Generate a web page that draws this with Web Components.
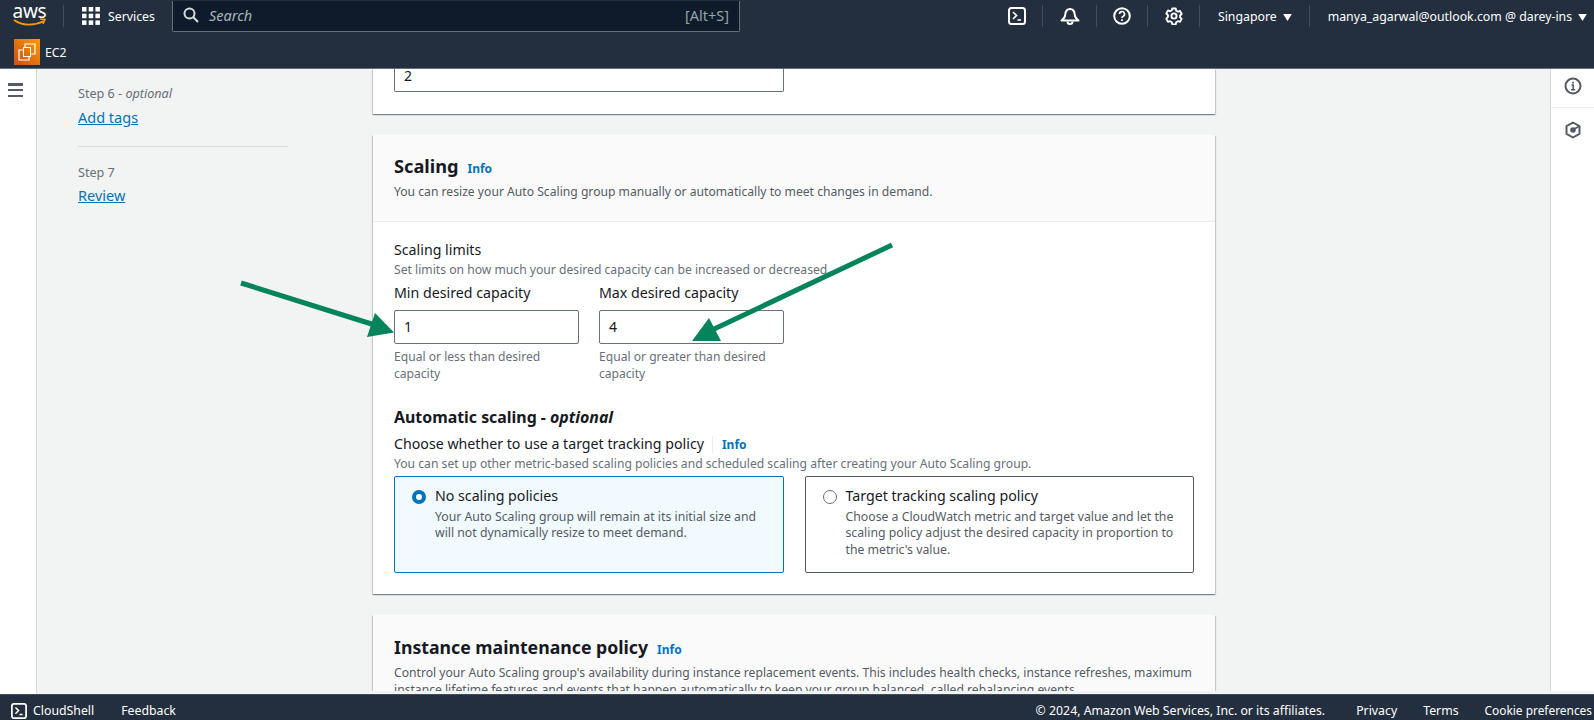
<!DOCTYPE html>
<html>
<head>
<meta charset="utf-8">
<title>EC2 Auto Scaling</title>
<style>
  html, body { margin: 0; height: 100%; overflow: hidden; background: #f2f3f3; }
  body { font-family: "Noto Sans", "Open Sans", sans-serif; color: #16191f; }
</style>
</head>
<body>
<app-shell>
  <wizard-nav slot="nav"></wizard-nav>

  <form-card slot="cards" cut>
    <num-field value="2" wide cut></num-field>
  </form-card>

  <form-card slot="cards" heading="Scaling" desc="You can resize your Auto Scaling group manually or automatically to meet changes in demand.">
    <scaling-body></scaling-body>
  </form-card>

  <form-card slot="cards" large heading="Instance maintenance policy" desc="Control your Auto Scaling group's availability during instance replacement events. This includes health checks, instance refreshes, maximum instance lifetime features and events that happen automatically to keep your group balanced, called rebalancing events."></form-card>
</app-shell>
<annot-arrows></annot-arrows>

<script>
const ICON = {
  terminal: `<svg viewBox="0 0 18 18" width="18" height="18" fill="none" stroke="currentColor" stroke-width="2"><rect x="1" y="1" width="16" height="16" rx="2.5"/><path d="M5 5l3.5 3.5L5 12M9.5 13H13" stroke-width="1.7"/></svg>`,
  bell: `<svg viewBox="0 0 20 18" width="20" height="18" fill="none" stroke="currentColor" stroke-width="2"><path d="M1.5 13.500h17c-2.500-1.600-3.500-3-3.800-6C14.400 4 12.500 2 10 2S5.600 4 5.300 7.500c-.3 3-1.300 4.400-3.800 6z" stroke-linejoin="round"/><path d="M7.500 14.500a2.500 2.500 0 0 0 5 0" /></svg>`,
  help: `<svg viewBox="0 0 18 18" width="18" height="18" fill="none" stroke="currentColor" stroke-width="2"><circle cx="9" cy="9" r="7.800"/><path d="M6.500 7a2.500 2.500 0 1 1 3.700 2.200c-.8.4-1.200.9-1.200 1.800" stroke-width="1.700"/><path d="M9 12.200v1.800" stroke-width="1.800"/></svg>`,
  gear: `<svg viewBox="0 0 18 18" width="18" height="18" fill="none" stroke="currentColor" stroke-width="1.900"><path d="M7.300 1.500h3.400l.5 2.200 1.700 1 2.100-.7 1.700 3-1.600 1.500v1.900l1.600 1.500-1.700 3-2.100-.7-1.700 1-.5 2.200H7.300l-.5-2.200-1.700-1-2.100.7-1.700-3L2.900 9.900V8L1.300 6.500l1.700-3 2.100.7 1.700-1z" stroke-linejoin="round"/><circle cx="9" cy="9" r="2.600"/></svg>`,
  search: `<svg viewBox="0 0 16 16" width="16" height="16" fill="none" stroke="currentColor" stroke-width="2"><circle cx="6.500" cy="6.500" r="5"/><path d="M10.300 10.300L15 15"/></svg>`,
  caret: `<svg viewBox="0 0 10 8" width="9" height="7" fill="currentColor"><path d="M0 0h10L5 8z"/></svg>`,
  grid: `<svg viewBox="0 0 18 18" width="18" height="18" fill="#fff"><rect x="0" y="0" width="4.500" height="4.500"/><rect x="6.700" y="0" width="4.500" height="4.500"/><rect x="13.400" y="0" width="4.500" height="4.500"/><rect x="0" y="6.700" width="4.500" height="4.500"/><rect x="6.700" y="6.700" width="4.500" height="4.500"/><rect x="13.400" y="6.700" width="4.500" height="4.500"/><rect x="0" y="13.400" width="4.500" height="4.500"/><rect x="6.700" y="13.400" width="4.500" height="4.500"/><rect x="13.400" y="13.400" width="4.500" height="4.500"/></svg>`,
  ec2: `<svg viewBox="0 0 26 26" width="26" height="26"><defs><linearGradient id="o" x1="0" y1="1" x2="1" y2="0"><stop offset="0" stop-color="#c8511b"/><stop offset="1" stop-color="#f90"/></linearGradient></defs><rect width="26" height="26" fill="url(#o)"/><g fill="none" stroke="#fff" stroke-width="1.200"><path d="M11 8V5h10v10h-4"/><path d="M9 11H5v10h10v-3"/><rect x="9.500" y="8.500" width="7" height="9" stroke-width="1"/></g></svg>`,
  info: `<svg viewBox="0 0 18 18" width="18" height="18" fill="none" stroke="#545b64" stroke-width="2"><circle cx="9" cy="9" r="7.500"/><path d="M7.500 8h1.700v4.500M7 12.700h4.200" stroke-width="1.600"/><path d="M8.200 4.800h1.800v1.700H8.200z" fill="#545b64" stroke="none"/></svg>`,
  hex: `<svg viewBox="0 0 18 18" width="18" height="18" fill="none" stroke="#545b64" stroke-width="2"><path d="M9 1.500l6.500 3.700v7.600L9 16.500l-6.500-3.700V5.200z" stroke-linejoin="round"/><circle cx="9" cy="9" r="2.800" fill="#545b64" stroke="none"/><path d="M10 8l5-2.500" stroke-width="1.600"/></svg>`
};

class AppShell extends HTMLElement {
  constructor() {
    super();
    this.attachShadow({ mode: "open" });
    this.shadowRoot.innerHTML = `
      <style>
        :host { display: flex; flex-direction: column; height: 720px; }
        #middle { flex: 1; display: flex; min-height: 0; }
        #rail-left {
          flex: none; background: #fff; border-right: 1px solid #d5dbdb;
          display: flex; padding: 14px 0 0 8px; box-sizing: border-box; width: 37px;
        }
        #burger { width: 15px; height: 14px; display: flex; flex-direction: column; justify-content: space-between; }
        #burger i { display: block; height: 2.500px; background: #545b64; }
        #main { flex: 1; min-width: 0; height: 622px; overflow: hidden; display: flex; padding-left: 41px; }
        #cards { width: 842px; margin-left: 85px; display: flex; flex-direction: column; gap: 21px; flex: none; }
        #rail-right {
          width: 43px; flex: none; height: 622px; background: #fff; border-left: 1px solid #d5dbdb;
          display: flex; flex-direction: column;
        }
        #rail-right div { height: 38px; box-sizing: border-box; padding-bottom: 4px; display: flex; align-items: center; justify-content: center; }
        #rail-right div + div { border-top: 1px solid #eaeded; height: 46px; padding-bottom: 2px; }
      </style>
      <top-bar></top-bar>
      <div id="middle">
        <div id="rail-left"><div id="burger"><i></i><i></i><i></i></div></div>
        <div id="main">
          <slot name="nav"></slot>
          <div id="cards"><slot name="cards"></slot></div>
        </div>
        <div id="rail-right">
          <div>${ICON.info}</div>
          <div>${ICON.hex}</div>
        </div>
      </div>
      <bottom-bar></bottom-bar>
    `;
  }
}

class TopBar extends HTMLElement {
  constructor() {
    super();
    this.attachShadow({ mode: "open" });
    this.shadowRoot.innerHTML = `
      <style>
        :host { display: block; height: 68px; background: #232f3e; border-bottom: 1px solid #687078; color: #fff; font-size: 12.300px; }
        #row1 { height: 32px; display: flex; align-items: center; position: relative; }
        #row2 { height: 36px; display: flex; align-items: center; padding: 4px 0 0 14px; box-sizing: border-box; gap: 5px; }
        #logo { width: 33px; margin-left: 13px; height: 28px; display: flex; flex-direction: column; align-items: center; }
        #logo span { font-size: 19px; line-height: 19px; letter-spacing: -0.3px; margin-top: 0; }
        #logo svg { margin-top: -3px; }
        .sep { width: 1px; height: 22px; background: #414d5c; flex: none; }
        #grid { margin-left: 18px; height: 18px; }
        #services { margin-left: 8px; }
        #search {
          margin-left: 17px; width: 568px; height: 31px; box-sizing: border-box; background: #0f1b2a;
          border: 1px solid #687078; border-top: none; border-radius: 0 0 2px 2px;
          display: flex; align-items: center; padding: 0 10px 2px; color: #d5dbdb;
        }
        #search em { margin-left: 10px; color: #aab7b8; font-size: 14.500px; }
        #search b { margin-left: auto; font-weight: 400; color: #95a5a6; font-size: 14.500px; }
        .ic { display: flex; align-items: center; justify-content: center; flex: none; }
        .caret { margin-left: 6px; }
      </style>
      <div id="row1">
        <div id="logo"><span>aws</span>
          <svg width="33" height="9" viewBox="0 0 33 9" fill="none"><path d="M1 2c8 6 20 6 30 1" stroke="#f90" stroke-width="1.800"/><path d="M27 1l5 .5-2 4.500" stroke="#f90" stroke-width="1.500"/></svg>
        </div>
        <div class="sep" style="margin-left:17px"></div>
        <div id="grid">${ICON.grid}</div>
        <span id="services">Services</span>
        <div id="search">${ICON.search}<em>Search</em><b>[Alt+S]</b></div>
        <div class="ic" style="width:18px;margin-left:268px">${ICON.terminal}</div>
        <div class="sep" style="margin-left:16px"></div>
        <div class="ic" style="width:20px;margin-left:17px">${ICON.bell}</div>
        <div class="sep" style="margin-left:16px"></div>
        <div class="ic" style="width:18px;margin-left:16px">${ICON.help}</div>
        <div class="sep" style="margin-left:16px"></div>
        <div class="ic" style="width:18px;margin-left:17px">${ICON.gear}</div>
        <div class="sep" style="margin-left:16px"></div>
        <span style="margin-left:18px">Singapore</span><span class="caret">${ICON.caret}</span>
        <div class="sep" style="margin-left:17px"></div>
        <span style="margin-left:18px;white-space:nowrap">manya_agarwal@outlook.com @ darey-ins</span><span class="caret">${ICON.caret}</span>
      </div>
      <div id="row2">${ICON.ec2}<span>EC2</span></div>
    `;
  }
}

class BottomBar extends HTMLElement {
  constructor() {
    super();
    this.attachShadow({ mode: "open" });
    this.shadowRoot.innerHTML = `
      <style>
        :host { display: flex; height: 26px; box-sizing: border-box; background: #232f3e; color: #fff; font-size: 12.300px; align-items: center; border-top: 1px solid #414d5c; padding-top: 6px; padding-left: 11px; white-space: nowrap; }
        svg { width: 16px; height: 16px; }
        #r { margin-left: auto; display: flex; align-items: baseline; }
      </style>
      ${ICON.terminal}
      <span style="margin-left:6px">CloudShell</span>
      <span style="margin-left:27px">Feedback</span>
      <div id="r">
        <span>© 2024, Amazon Web Services, Inc. or its affiliates.</span>
        <span style="margin-left:31px">Privacy</span>
        <span style="margin-left:26px">Terms</span>
        <span style="margin-left:26px;margin-right:2px;font-size:11.900px">Cookie preferences</span>
      </div>
    `;
  }
}

class WizardNav extends HTMLElement {
  constructor() {
    super();
    this.attachShadow({ mode: "open" });
    this.shadowRoot.innerHTML = `
      <style>
        :host { display: block; width: 210px; flex: none; padding-top: 17px; }
        .step { font-size: 12.600px; line-height: 16px; color: #687078; }
        a { display: block; font-size: 14.500px; line-height: 20px; color: #0073bb; text-decoration: underline; }
        hr { border: 0; border-top: 1px solid #d5dbdb; margin: 19px 0 0; }
      </style>
      <div class="step">Step 6 - <em>optional</em></div>
      <a style="margin-top:5px">Add tags</a>
      <hr>
      <div class="step" style="margin-top:18px">Step 7</div>
      <a style="margin-top:4px">Review</a>
    `;
  }
}

class InfoLink extends HTMLElement {
  constructor() {
    super();
    this.attachShadow({ mode: "open" });
    this.shadowRoot.innerHTML = `
      <style>:host { color: #0073bb; font-size: 12px; font-weight: 700; }</style>
      Info
    `;
  }
}

class FormCard extends HTMLElement {
  constructor() {
    super();
    this.attachShadow({ mode: "open" });
  }

  connectedCallback() {
    const heading = this.getAttribute("heading");
    const desc = this.getAttribute("desc");
    const head = heading ? `
      <div id="head">
        <div id="title"><span id="t">${heading}</span><info-link></info-link></div>
        <div id="desc">${desc}</div>
      </div>` : "";
    this.shadowRoot.innerHTML = `
      <style>
        :host { display: block; background: #fff; box-shadow: 0 1px 1px 0 rgba(0,28,36,.3), 1px 1px 1px 0 rgba(0,28,36,.15), -1px 1px 1px 0 rgba(0,28,36,.15); flex: none; }
        :host([cut]) { padding: 0 21px 22px; }
        #head { background: #fafafa; border-bottom: 1px solid #eaeded; padding: 19px 21px 20px; height: 87px; box-sizing: border-box; }
        :host([large]) #head { height: auto; padding-top: 20px; padding-bottom: 12px; }
        :host([large]) #t { font-size: 17.700px; }
        #title { display: flex; align-items: baseline; gap: 9px; line-height: 24px; }
        #t { font-size: 18.200px; font-weight: 700; color: #16191f; }
        #desc { margin-top: 2px; font-size: 12.150px; line-height: 17px; color: #545b64; }
      </style>
      ${head}
      <slot></slot>
    `;
  }
}

class NumField extends HTMLElement {
  constructor() {
    super();
    this.attachShadow({ mode: "open" });
  }

  connectedCallback() {
    this.shadowRoot.innerHTML = `
      <style>
        :host { display: block; width: 184.500px; }
        :host([wide]) { width: 390px; }
        #box {
          height: 34px; box-sizing: border-box; border: 1px solid #687078; border-radius: 2px;
          padding: 0 9px 1px; display: flex; align-items: center; font-size: 14px; color: #16191f; background: #fff;
        }
        :host([cut]) #box { height: 23px; border-top: 0; border-radius: 0 0 2px 2px; padding-bottom: 9px; }
      </style>
      <div id="box">${this.getAttribute("value")}</div>
    `;
  }
}

class RadioTile extends HTMLElement {
  constructor() {
    super();
    this.attachShadow({ mode: "open" });
  }

  connectedCallback() {
    this.shadowRoot.innerHTML = `
      <style>
        :host { display: flex; flex: 1; box-sizing: border-box; height: 97px; border: 1px solid #545b64; border-radius: 2px; padding: 10px 18px 0 17px; gap: 9px; background: #fff; }
        :host([checked]) { border-color: #0073bb; background: #f1faff; }
        #dot { width: 14px; height: 14px; margin-top: 3px; flex: none; box-sizing: border-box; border-radius: 50%; border: 1px solid #687078; background: #fff; }
        :host([checked]) #dot { border: 4px solid #0073bb; }
        #label { font-size: 14.200px; line-height: 18px; color: #16191f; }
        #sub { margin-top: 3.500px; font-size: 12.250px; line-height: 16.800px; color: #545b64; }
      </style>
      <div id="dot"></div>
      <div>
        <div id="label"><slot name="label"></slot></div>
        <div id="sub"><slot name="sub"></slot></div>
      </div>
    `;
  }
}

class ScalingBody extends HTMLElement {
  constructor() {
    super();
    this.attachShadow({ mode: "open" });
    this.shadowRoot.innerHTML = `
      <style>
        :host { display: block; padding: 19px 21px 21px; }
        .h { font-size: 14.200px; line-height: 18px; color: #16191f; }
        .s { font-size: 12.150px; line-height: 16px; color: #687078; }
        .fields { display: flex; gap: 20.500px; margin-top: 6px; }
        .field { width: 184.500px; }
        .field num-field { margin-top: 8px; }
        .help { margin-top: 5px; font-size: 12.100px; line-height: 16.500px; color: #687078; }
        h3 { margin: 25px 0 0; font-size: 15.900px; line-height: 20px; font-weight: 700; color: #16191f; }
        .choose { display: flex; align-items: center; margin-top: 8px; }
        .choose info-link { border-left: 1px solid #eaeded; margin-left: 8px; padding-left: 9px; }
        .tiles { display: flex; gap: 21px; margin-top: 4px; }
      </style>
      <div class="h">Scaling limits</div>
      <div class="s" style="margin-top:3px">Set limits on how much your desired capacity can be increased or decreased.</div>
      <div class="fields">
        <div class="field">
          <div class="h">Min desired capacity</div>
          <num-field value="1"></num-field>
          <div class="help">Equal or less than desired capacity</div>
        </div>
        <div class="field">
          <div class="h">Max desired capacity</div>
          <num-field value="4"></num-field>
          <div class="help">Equal or greater than desired capacity</div>
        </div>
      </div>
      <h3>Automatic scaling - <em>optional</em></h3>
      <div class="choose"><span class="h">Choose whether to use a target tracking policy</span><info-link></info-link></div>
      <div class="s" style="margin-top:3px">You can set up other metric-based scaling policies and scheduled scaling after creating your Auto Scaling group.</div>
      <div class="tiles">
        <radio-tile checked>
          <span slot="label">No scaling policies</span>
          <span slot="sub">Your Auto Scaling group will remain at its initial size and will not dynamically resize to meet demand.</span>
        </radio-tile>
        <radio-tile>
          <span slot="label">Target tracking scaling policy</span>
          <span slot="sub">Choose a CloudWatch metric and target value and let the scaling policy adjust the desired capacity in proportion to the metric's value.</span>
        </radio-tile>
      </div>
    `;
  }
}

// the two green callouts drawn over the screenshot
class AnnotArrows extends HTMLElement {
  constructor() {
    super();
    this.attachShadow({ mode: "open" });
    this.shadowRoot.innerHTML = `
      <style>
        :host { position: absolute; left: 0; top: 0; width: 1594px; height: 720px; pointer-events: none; }
      </style>
      <svg width="1594" height="720" fill="#04845a" stroke="none">
        <path d="M241 283L378 326" stroke="#04845a" stroke-width="5"/>
        <path d="M394 332.500L375 313 367 337z"/>
        <path d="M892 245L712 330" stroke="#04845a" stroke-width="5"/>
        <path d="M692 341L709 318 721 341z"/>
      </svg>
    `;
  }
}

customElements.define("info-link", InfoLink);
customElements.define("top-bar", TopBar);
customElements.define("bottom-bar", BottomBar);
customElements.define("wizard-nav", WizardNav);
customElements.define("num-field", NumField);
customElements.define("radio-tile", RadioTile);
customElements.define("scaling-body", ScalingBody);
customElements.define("form-card", FormCard);
customElements.define("annot-arrows", AnnotArrows);
customElements.define("app-shell", AppShell);
</script>
</body>
</html>
